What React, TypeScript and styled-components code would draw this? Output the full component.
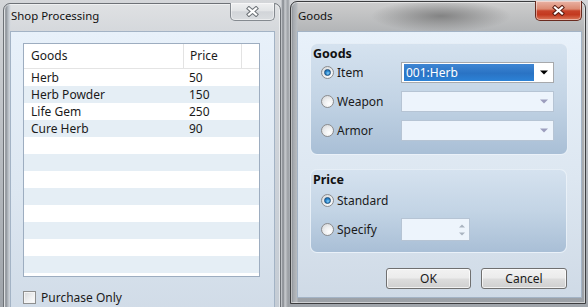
import React from "react";
import styled, { createGlobalStyle } from "styled-components";

const GlobalStyle = createGlobalStyle`
  html, body { margin: 0; padding: 0; }
  body {
    width: 588px;
    height: 307px;
    overflow: hidden;
    font-family: "Noto Sans", "Open Sans", sans-serif;
    font-size: 12px;
    color: #1a1a1a;
  }
  #root { width: 588px; height: 307px; }
`;

const Desktop = styled.div`
  width: 588px;
  height: 307px;
  overflow: hidden;
  display: flex;
  align-items: flex-start;
  background:
    linear-gradient(90deg, transparent 281px, #d3d6da 281px, #80848a 283px, #c9ccd0 285px, #9a9ea3 288px, transparent 290px),
    linear-gradient(180deg, #d4d6d9 0%, #b8bcc1 50%, #9fa4aa 100%);
`;

type WinProps = {
  $active?: boolean;
  $top: number;
  $left: number;
  $width: number;
  $height: number;
  $padR: number;
};

const Window = styled.section<WinProps>`
  flex: none;
  box-sizing: border-box;
  margin-top: ${(p) => p.$top}px;
  margin-left: ${(p) => p.$left}px;
  width: ${(p) => p.$width}px;
  height: ${(p) => p.$height}px;
  border: 1px solid ${(p) => (p.$active ? "#3c3d3f" : "#6d7176")};
  border-radius: 7px 7px 0 0;
  padding: 0 ${(p) => p.$padR}px 5px 6px;
  display: flex;
  flex-direction: column;
  box-shadow: inset 0 0 0 1px rgba(255, 255, 255, 0.5);
  background: ${(p) =>
    p.$active
      ? `radial-gradient(ellipse 70px 16px at 150px 14px, rgba(110,110,110,0.75), rgba(110,110,110,0) 100%),
         linear-gradient(90deg, #6f7378 0px, #a3a7ac 2px, #b8bcc0 6px, transparent 7px),
         linear-gradient(180deg, #cdcdcd 0px, #b4b6b8 28px, #9ca1a7 100%)`
      : `linear-gradient(90deg, #c8ccd1 0px, #8d9298 2px, #b5bbc2 4px, #d2d7dd 6px, transparent 7px),
         linear-gradient(180deg, #dfe1e3 0px, #d5d8dc 27px, #c3cbd4 100%)`};
`;

const TitleBar = styled.div<{ $h: number }>`
  flex: none;
  height: ${(p) => p.$h}px;
  display: flex;
  justify-content: space-between;
`;

const TitleText = styled.div`
  align-self: flex-end;
  margin: 0 0 7px 1px;
  font-size: 11.4px;
  line-height: 16px;
  color: #111;
`;

const CloseButton = styled.div<{ $active?: boolean }>`
  flex: none;
  box-sizing: border-box;
  width: ${(p) => (p.$active ? 47 : 45)}px;
  height: ${(p) => (p.$active ? 20 : 18)}px;
  margin-top: -1px;
  display: grid;
  place-items: center;
  border: 1px solid ${(p) => (p.$active ? "#6a2b1f" : "#858a90")};
  border-top: none;
  border-radius: 0 0 5px 5px;
  box-shadow: inset 0 0 0 1px rgba(255, 255, 255, 0.45);
  background: ${(p) =>
    p.$active
      ? "linear-gradient(180deg, #e9b3a5 0%, #dc8a72 42%, #c8432a 52%, #c3391f 72%, #dc7a5c 100%)"
      : "linear-gradient(180deg, #eff0f1 0%, #e2e4e6 45%, #d2d5d9 52%, #dadde0 100%)"};
`;

const CloseGlyph = ({ dark }: { dark: string }) => (
  <svg width="13" height="11" viewBox="0 0 13 11">
    <path d="M3 2.5 L10 8.5 M10 2.5 L3 8.5" stroke={dark} strokeWidth="4.2" strokeLinecap="square" />
    <path d="M3 2.5 L10 8.5 M10 2.5 L3 8.5" stroke="#ffffff" strokeWidth="2.2" strokeLinecap="square" />
  </svg>
);

const Client = styled.div`
  flex: 1;
  min-height: 0;
  box-sizing: border-box;
  border: 1px solid #a3b3c5;
  background: linear-gradient(180deg, #e8f1fa 0%, #dde7f1 55%, #cfdae6 100%);
  padding: 11px 14px 0 12px;
  display: flex;
  flex-direction: column;
`;

/* ---------- List view ---------- */

const ListView = styled.div`
  flex: none;
  box-sizing: border-box;
  height: 234px;
  border: 1px solid #9dadc0;
  background: #ffffff;
  overflow: hidden;
`;

const Columns = "160px 58px 1fr";

const HeaderRow = styled.div`
  display: grid;
  grid-template-columns: ${Columns};
  height: 24px;
  border-bottom: 1px solid #e4e4e4;
`;

const HeaderCell = styled.div<{ $pad: number; $divider?: boolean }>`
  padding-left: ${(p) => p.$pad}px;
  line-height: 24px;
  border-right: ${(p) => (p.$divider ? "1px solid #e3e3e3" : "none")};
  color: #1a1a1a;
`;

const Row = styled.div<{ $alt: boolean }>`
  display: grid;
  grid-template-columns: ${Columns};
  height: 17px;
  background: ${(p) => (p.$alt ? "#e5eef5" : "#ffffff")};
`;

const Cell = styled.div<{ $pad: number }>`
  padding-left: ${(p) => p.$pad}px;
  line-height: 17px;
  white-space: nowrap;
`;

const CheckRow = styled.label`
  display: flex;
  align-items: center;
  gap: 5px;
  margin-top: 14px;
  line-height: 13px;
`;

const CheckBox = styled.span`
  box-sizing: border-box;
  width: 13px;
  height: 13px;
  border: 1px solid #8e8f8f;
  background: linear-gradient(135deg, #d6d8da 0%, #f1f2f3 60%, #fdfdfd 100%);
  box-shadow: inset 0 0 0 1px #f4f4f4;
`;

/* ---------- Dialog parts ---------- */

const Group = styled.fieldset<{ $padB: number }>`
  margin: 0;
  box-sizing: border-box;
  border: 1px solid rgba(236, 243, 250, 0.9);
  border-radius: 7px;
  padding: 2px 13px ${(p) => p.$padB}px 2px;
  background: linear-gradient(180deg, #d5e2ef 0%, #c3d4e5 50%, #a9bfd6 100%);
`;

const GroupTitle = styled.div`
  font-weight: 700;
  font-size: 12.5px;
  line-height: 16px;
  color: #111;
`;

const Options = styled.div<{ $gap: number; $top?: number }>`
  display: flex;
  flex-direction: column;
  gap: ${(p) => p.$gap}px;
  margin-top: ${(p) => p.$top ?? 0}px;
  padding-left: 8px;
`;

const OptionRow = styled.div<{ $h: number }>`
  display: grid;
  grid-template-columns: 80px auto;
  align-items: center;
  height: ${(p) => p.$h}px;
`;

const RadioLabel = styled.label`
  display: flex;
  align-items: center;
  gap: 3px;
  line-height: 15px;
`;

const RadioCircle = styled.span<{ $checked?: boolean }>`
  position: relative;
  box-sizing: border-box;
  width: 13px;
  height: 13px;
  border-radius: 50%;
  border: 1px solid #8b8c8e;
  background: radial-gradient(circle at 65% 70%, #ffffff 0%, #eeeff0 45%, #cfd1d3 100%);
  &::after {
    content: "";
    display: ${(p) => (p.$checked ? "block" : "none")};
    position: absolute;
    left: 2px;
    top: 2px;
    width: 7px;
    height: 7px;
    box-sizing: border-box;
    border-radius: 50%;
    border: 1px solid #1d4f7d;
    background: radial-gradient(circle at 60% 65%, #8fd3f7 0%, #2b8ad2 45%, #175d9c 100%);
  }
`;

const Combo = styled.div<{ $enabled?: boolean }>`
  box-sizing: border-box;
  width: 153px;
  height: 21px;
  display: flex;
  padding: 1px 0 1px 2px;
  border: 1px solid ${(p) => (p.$enabled ? "#a7a9ac" : "#b6c4d4")};
  background: ${(p) => (p.$enabled ? "#ffffff" : "#edf4fc")};
`;

const ComboValue = styled.div<{ $selected?: boolean }>`
  flex: 1;
  padding-left: 2px;
  line-height: 17px;
  color: #ffffff;
  background: ${(p) =>
    p.$selected ? "linear-gradient(180deg, #3f86d3 0%, #2a73c4 55%, #2c82d6 100%)" : "transparent"};
`;

const ArrowBox = styled.div`
  flex: none;
  width: 19px;
  display: grid;
  place-items: center;
`;

const DownArrow = ({ color }: { color: string }) => (
  <svg width="8" height="5" viewBox="0 0 8 5">
    <path d="M0 0.5 H8 L4 4.5 Z" fill={color} />
  </svg>
);

const SpinBox = styled.div`
  box-sizing: border-box;
  width: 69px;
  height: 23px;
  border: 1px solid #b6c4d4;
  background: #edf4fc;
  display: flex;
  justify-content: flex-end;
`;

const SpinArrows = styled.div`
  width: 14px;
  display: flex;
  flex-direction: column;
  justify-content: center;
  align-items: center;
  gap: 4px;
`;

const Tri = ({ up }: { up?: boolean }) => (
  <svg width="6" height="4" viewBox="0 0 6 4">
    <path d={up ? "M0 3.5 H6 L3 0.5 Z" : "M0 0.5 H6 L3 3.5 Z"} fill="#a9b3c0" />
  </svg>
);

const Stack = styled.div`
  display: flex;
  flex-direction: column;
  gap: 14px;
`;

const ButtonBar = styled.div`
  display: flex;
  justify-content: flex-end;
  gap: 10px;
  margin-top: 15px;
`;

const Button = styled.button<{ $w: number }>`
  box-sizing: border-box;
  width: ${(p) => p.$w}px;
  height: 21px;
  padding: 0;
  font: inherit;
  font-size: 12px;
  color: #1a1a1a;
  border: 1px solid #707070;
  border-radius: 3px;
  box-shadow: inset 0 0 0 1px rgba(255, 255, 255, 0.7);
  background: linear-gradient(180deg, #f2f2f2 0%, #ebebeb 48%, #dddddd 52%, #cfcfcf 100%);
`;

const goods = [
  { name: "Herb", price: "50" },
  { name: "Herb Powder", price: "150" },
  { name: "Life Gem", price: "250" },
  { name: "Cure Herb", price: "90" },
];

const rows = Array.from({ length: 13 }, (_, i) => goods[i] ?? null);

export default function App() {
  return (
    <>
      <GlobalStyle />
      <Desktop>
        <Window $top={3} $left={3} $width={278} $height={330} $padR={5}>
          <TitleBar $h={27}>
            <TitleText>Shop Processing</TitleText>
            <CloseButton>
              <CloseGlyph dark="#6e7378" />
            </CloseButton>
          </TitleBar>
          <Client>
            <ListView>
              <HeaderRow>
                <HeaderCell $pad={7} $divider>Goods</HeaderCell>
                <HeaderCell $pad={6} $divider>Price</HeaderCell>
                <HeaderCell $pad={0} />
              </HeaderRow>
              {rows.map((r, i) => (
                <Row key={i} $alt={i % 2 === 1}>
                  <Cell $pad={7}>{r?.name}</Cell>
                  <Cell $pad={5}>{r?.price}</Cell>
                  <Cell $pad={0} />
                </Row>
              ))}
            </ListView>
            <CheckRow>
              <CheckBox />
              Purchase Only
            </CheckRow>
          </Client>
        </Window>

        <Window $active $top={1} $left={9} $width={296} $height={303} $padR={3}>
          <TitleBar $h={29}>
            <TitleText>Goods</TitleText>
            <CloseButton $active>
              <CloseGlyph dark="#5a1d12" />
            </CloseButton>
          </TitleBar>
          <Client>
            <Stack>
              <Group $padB={13}>
                <GroupTitle>Goods</GroupTitle>
                <Options $gap={8}>
                  <OptionRow $h={21}>
                    <RadioLabel>
                      <RadioCircle $checked />
                      Item
                    </RadioLabel>
                    <Combo $enabled>
                      <ComboValue $selected>001:Herb</ComboValue>
                      <ArrowBox>
                        <DownArrow color="#000000" />
                      </ArrowBox>
                    </Combo>
                  </OptionRow>
                  <OptionRow $h={21}>
                    <RadioLabel>
                      <RadioCircle />
                      Weapon
                    </RadioLabel>
                    <Combo>
                      <ComboValue />
                      <ArrowBox>
                        <DownArrow color="#9c9dbd" />
                      </ArrowBox>
                    </Combo>
                  </OptionRow>
                  <OptionRow $h={21}>
                    <RadioLabel>
                      <RadioCircle />
                      Armor
                    </RadioLabel>
                    <Combo>
                      <ComboValue />
                      <ArrowBox>
                        <DownArrow color="#9c9dbd" />
                      </ArrowBox>
                    </Combo>
                  </OptionRow>
                </Options>
              </Group>
              <Group $padB={11}>
                <GroupTitle>Price</GroupTitle>
                <Options $gap={7} $top={2}>
                  <OptionRow $h={21}>
                    <RadioLabel>
                      <RadioCircle $checked />
                      Standard
                    </RadioLabel>
                  </OptionRow>
                  <OptionRow $h={23}>
                    <RadioLabel>
                      <RadioCircle />
                      Specify
                    </RadioLabel>
                    <SpinBox>
                      <SpinArrows>
                        <Tri up />
                        <Tri />
                      </SpinArrows>
                    </SpinBox>
                  </OptionRow>
                </Options>
              </Group>
            </Stack>
            <ButtonBar>
              <Button $w={85}>OK</Button>
              <Button $w={86}>Cancel</Button>
            </ButtonBar>
          </Client>
        </Window>
      </Desktop>
    </>
  );
}
